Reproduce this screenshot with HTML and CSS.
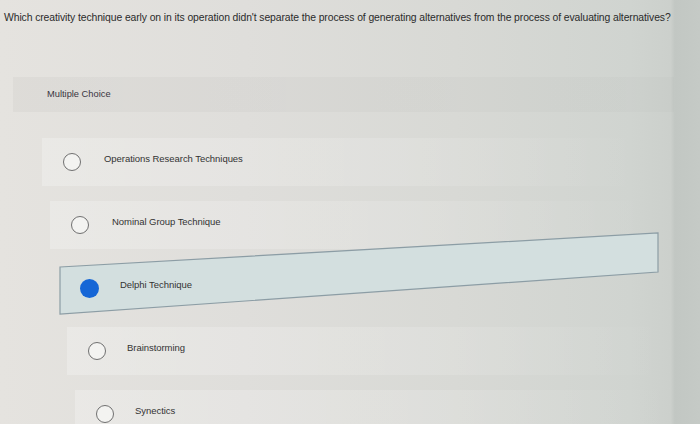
FILE: index.html
```html
<!DOCTYPE html>
<html>
<head>
<meta charset="utf-8">
<link rel="stylesheet" href="styles.css">
</head>
<body>
<div class="page">
  <p class="question">Which creativity technique early on in its operation didn't separate the process of generating alternatives from the process of evaluating alternatives?</p>
  <div class="type-band"><span class="type-label">Multiple Choice</span></div>
  <ul class="options">
    <li class="option o1"><span class="radio"></span><span class="label">Operations Research Techniques</span></li>
    <li class="option o2"><span class="radio"></span><span class="label">Nominal Group Technique</span></li>
    <li class="option o3 selected">
      <svg class="sel-box" width="620" height="100" viewBox="0 -40 620 100"><polygon points="1,3 599,-31 599,8 1,50" fill="#d3dfdf" stroke="#8c9da5" stroke-width="1.2"/></svg>
      <span class="radio on"></span><span class="label">Delphi Technique</span></li>
    <li class="option o4"><span class="radio"></span><span class="label">Brainstorming</span></li>
    <li class="option o5"><span class="radio"></span><span class="label">Synectics</span></li>
  </ul>
</div>
</body>
</html>
```

FILE: styles.css
```css
html, body {
  margin: 0;
  padding: 0;
  height: 100%;
  overflow: hidden;
}
body {
  background: linear-gradient(to right, #e5e3df 0%, #dfdedb 35%, #d8d9d5 65%, #d0d4d0 90%, #ccd0cc 95.8%, #c2c7c3 96.4%, #c5cac6 100%);
  font-family: "Liberation Sans", Arial, sans-serif;
  color: #2f2f2f;
}
.page {
  position: relative;
  height: 424px;
}
.question {
  margin: 0;
  padding: 11px 0 0 4px;
  font-size: 10.4px;
  line-height: 14px;
  color: #2b2b2b;
  white-space: nowrap;
  letter-spacing: -0.1px;
}
.type-band {
  margin: 52px 26px 0 13px;
  height: 35px;
  display: flex;
  align-items: center;
  padding-left: 34px;
  background: linear-gradient(to right, rgba(0,0,0,0.03), rgba(0,0,0,0.015));
}
.type-label {
  font-size: 9.3px;
  color: #3a3540;
  margin-top: -2px;
}
.options {
  list-style: none;
  margin: 26px 0 0 0;
  padding: 0;
}
.option {
  position: relative;
  height: 48px;
  margin-bottom: 15px;
  display: flex;
  align-items: center;
  padding-left: 21px;
  width: 580px;
  background: linear-gradient(to right, rgba(255,255,255,0.24), rgba(255,255,255,0.14) 60%, rgba(255,255,255,0));
}
.o1 { margin-left: 42px; }
.o2 { margin-left: 50px; }
.o3 { margin-left: 59px; background: none; }
.o4 { margin-left: 67px; }
.o5 { margin-left: 75px; }
.sel-box {
  position: absolute;
  left: 0;
  top: -40px;
  overflow: visible;
}
.radio {
  position: relative;
  box-sizing: border-box;
  width: 18px;
  height: 18px;
  border-radius: 50%;
  border: 1.5px solid #707070;
  background: #f3f3f1;
  flex: none;
}
.radio.on {
  width: 19px;
  height: 19px;
  border: none;
  background: #1566d6;
}
.label {
  position: relative;
  margin-left: 23px;
  padding-bottom: 8px;
  font-size: 9.5px;
  color: #333;
  letter-spacing: -0.05px;
}
.o3 .label,
.o4 .label,
.o5 .label {
  margin-left: 21px;
}
```
